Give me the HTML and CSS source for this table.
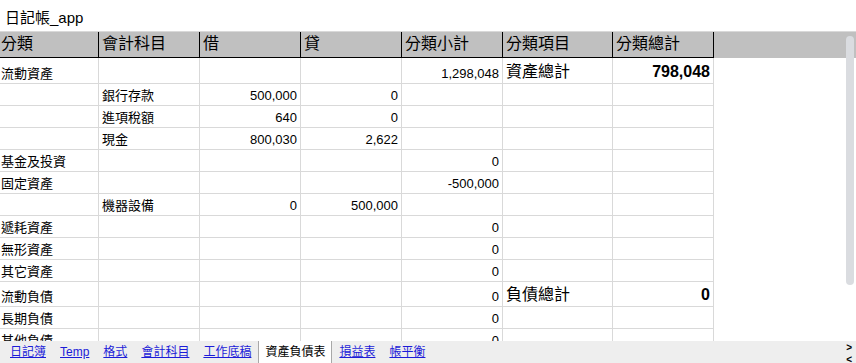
FILE: index.html
```html
<!DOCTYPE html>
<html lang="zh-Hant">
<head>
<meta charset="utf-8">
<title>日記帳_app</title>
<link rel="stylesheet" href="styles.css">
</head>
<body>
<div class="title">日記帳_app</div>
<div class="sheet">
  <div class="grid">
    <div class="row head">
      <div class="c">分類</div><div class="c">會計科目</div><div class="c">借</div><div class="c">貸</div><div class="c">分類小計</div><div class="c">分類項目</div><div class="c">分類總計</div>
    </div>
    <div class="row tall">
      <div class="c">流動資產</div><div class="c"></div><div class="c"></div><div class="c"></div><div class="c num">1,298,048</div><div class="c big">資產總計</div><div class="c num big bold">798,048</div>
    </div>
    <div class="row">
      <div class="c"></div><div class="c">銀行存款</div><div class="c num">500,000</div><div class="c num">0</div><div class="c"></div><div class="c"></div><div class="c"></div>
    </div>
    <div class="row">
      <div class="c"></div><div class="c">進項稅額</div><div class="c num">640</div><div class="c num">0</div><div class="c"></div><div class="c"></div><div class="c"></div>
    </div>
    <div class="row">
      <div class="c"></div><div class="c">現金</div><div class="c num">800,030</div><div class="c num">2,622</div><div class="c"></div><div class="c"></div><div class="c"></div>
    </div>
    <div class="row">
      <div class="c">基金及投資</div><div class="c"></div><div class="c"></div><div class="c"></div><div class="c num">0</div><div class="c"></div><div class="c"></div>
    </div>
    <div class="row">
      <div class="c">固定資產</div><div class="c"></div><div class="c"></div><div class="c"></div><div class="c num">-500,000</div><div class="c"></div><div class="c"></div>
    </div>
    <div class="row">
      <div class="c"></div><div class="c">機器設備</div><div class="c num">0</div><div class="c num">500,000</div><div class="c"></div><div class="c"></div><div class="c"></div>
    </div>
    <div class="row">
      <div class="c">遞耗資產</div><div class="c"></div><div class="c"></div><div class="c"></div><div class="c num">0</div><div class="c"></div><div class="c"></div>
    </div>
    <div class="row">
      <div class="c">無形資產</div><div class="c"></div><div class="c"></div><div class="c"></div><div class="c num">0</div><div class="c"></div><div class="c"></div>
    </div>
    <div class="row">
      <div class="c">其它資產</div><div class="c"></div><div class="c"></div><div class="c"></div><div class="c num">0</div><div class="c"></div><div class="c"></div>
    </div>
    <div class="row mid">
      <div class="c">流動負債</div><div class="c"></div><div class="c"></div><div class="c"></div><div class="c num">0</div><div class="c big">負債總計</div><div class="c num big bold">0</div>
    </div>
    <div class="row">
      <div class="c">長期負債</div><div class="c"></div><div class="c"></div><div class="c"></div><div class="c num">0</div><div class="c"></div><div class="c"></div>
    </div>
    <div class="row">
      <div class="c">其他負債</div><div class="c"></div><div class="c"></div><div class="c"></div><div class="c num">0</div><div class="c"></div><div class="c"></div>
    </div>
  </div>
  <div class="scrollbar"></div>
</div>
<div class="tabs">
  <span class="tab"><a href="#">日記簿</a></span>
  <span class="tab"><a href="#">Temp</a></span>
  <span class="tab"><a href="#">格式</a></span>
  <span class="tab"><a href="#">會計科目</a></span>
  <span class="tab"><a href="#">工作底稿</a></span>
  <span class="tab active">資產負債表</span>
  <span class="tab"><a href="#">損益表</a></span>
  <span class="tab"><a href="#">帳平衡</a></span>
  <span class="arrows"><span>&gt;</span><span>&lt;</span></span>
</div>
</body>
</html>
```

FILE: styles.css
```css
html, body {
  margin: 0;
  padding: 0;
  background: #fff;
}

body {
  font-family: "Liberation Sans", "Noto Sans CJK TC", Arial, sans-serif;
  color: #000;
  width: 856px;
  height: 363px;
  overflow: hidden;
}

.title {
  height: 31px;
  box-sizing: border-box;
  padding: 8px 0 0 5px;
  font-size: 15px;
  line-height: 20px;
}

.sheet {
  position: relative;
  height: 310px;
  box-sizing: border-box;
  border-top: 1px solid #d9d9d9;
  overflow: hidden;
}

.row {
  display: grid;
  grid-template-columns: 99px 101px 101px 101px 101px 110px 101px;
  height: 22px;
}

.c {
  box-sizing: border-box;
  border-right: 1px solid #d9d9d9;
  border-bottom: 1px solid #d9d9d9;
  padding: 0 3px 2px 3px;
  display: flex;
  align-items: flex-end;
  font-size: 13px;
  line-height: 15px;
  white-space: nowrap;
  overflow: hidden;
}

.c:first-child {
  padding-left: 1px;
}

.num {
  justify-content: flex-end;
}

.big {
  font-size: 16px;
  line-height: 19px;
}

.bold {
  font-weight: bold;
}

.head {
  height: 26px;
  background: #c0c0c0;
}

.head .c {
  border-color: #000;
  font-size: 16px;
  line-height: 19px;
  padding-bottom: 4px;
}

.tall {
  height: 26px;
}

.mid {
  height: 25px;
}

.scrollbar {
  position: absolute;
  top: 4px;
  right: 2px;
  width: 8px;
  height: 249px;
  border-radius: 4px;
  background: #dadce0;
}

.tabs {
  height: 22px;
  background: #eeeeee;
  display: flex;
  align-items: stretch;
  padding-left: 3px;
  font-size: 12px;
  line-height: 22px;
  white-space: nowrap;
}

.tab {
  padding: 0 7px;
}

.tab a {
  color: #1c1cd8;
  text-decoration: underline;
}

.tab.active {
  background: #fff;
  color: #000;
  padding: 0 6px;
  border-left: 1px solid #a8a8a8;
  border-right: 1px solid #a8a8a8;
}

.arrows {
  margin-left: auto;
  display: flex;
  flex-direction: column;
  padding: 1px 4px 0 0;
  font-size: 10px;
  font-weight: bold;
  line-height: 12px;
}
```
